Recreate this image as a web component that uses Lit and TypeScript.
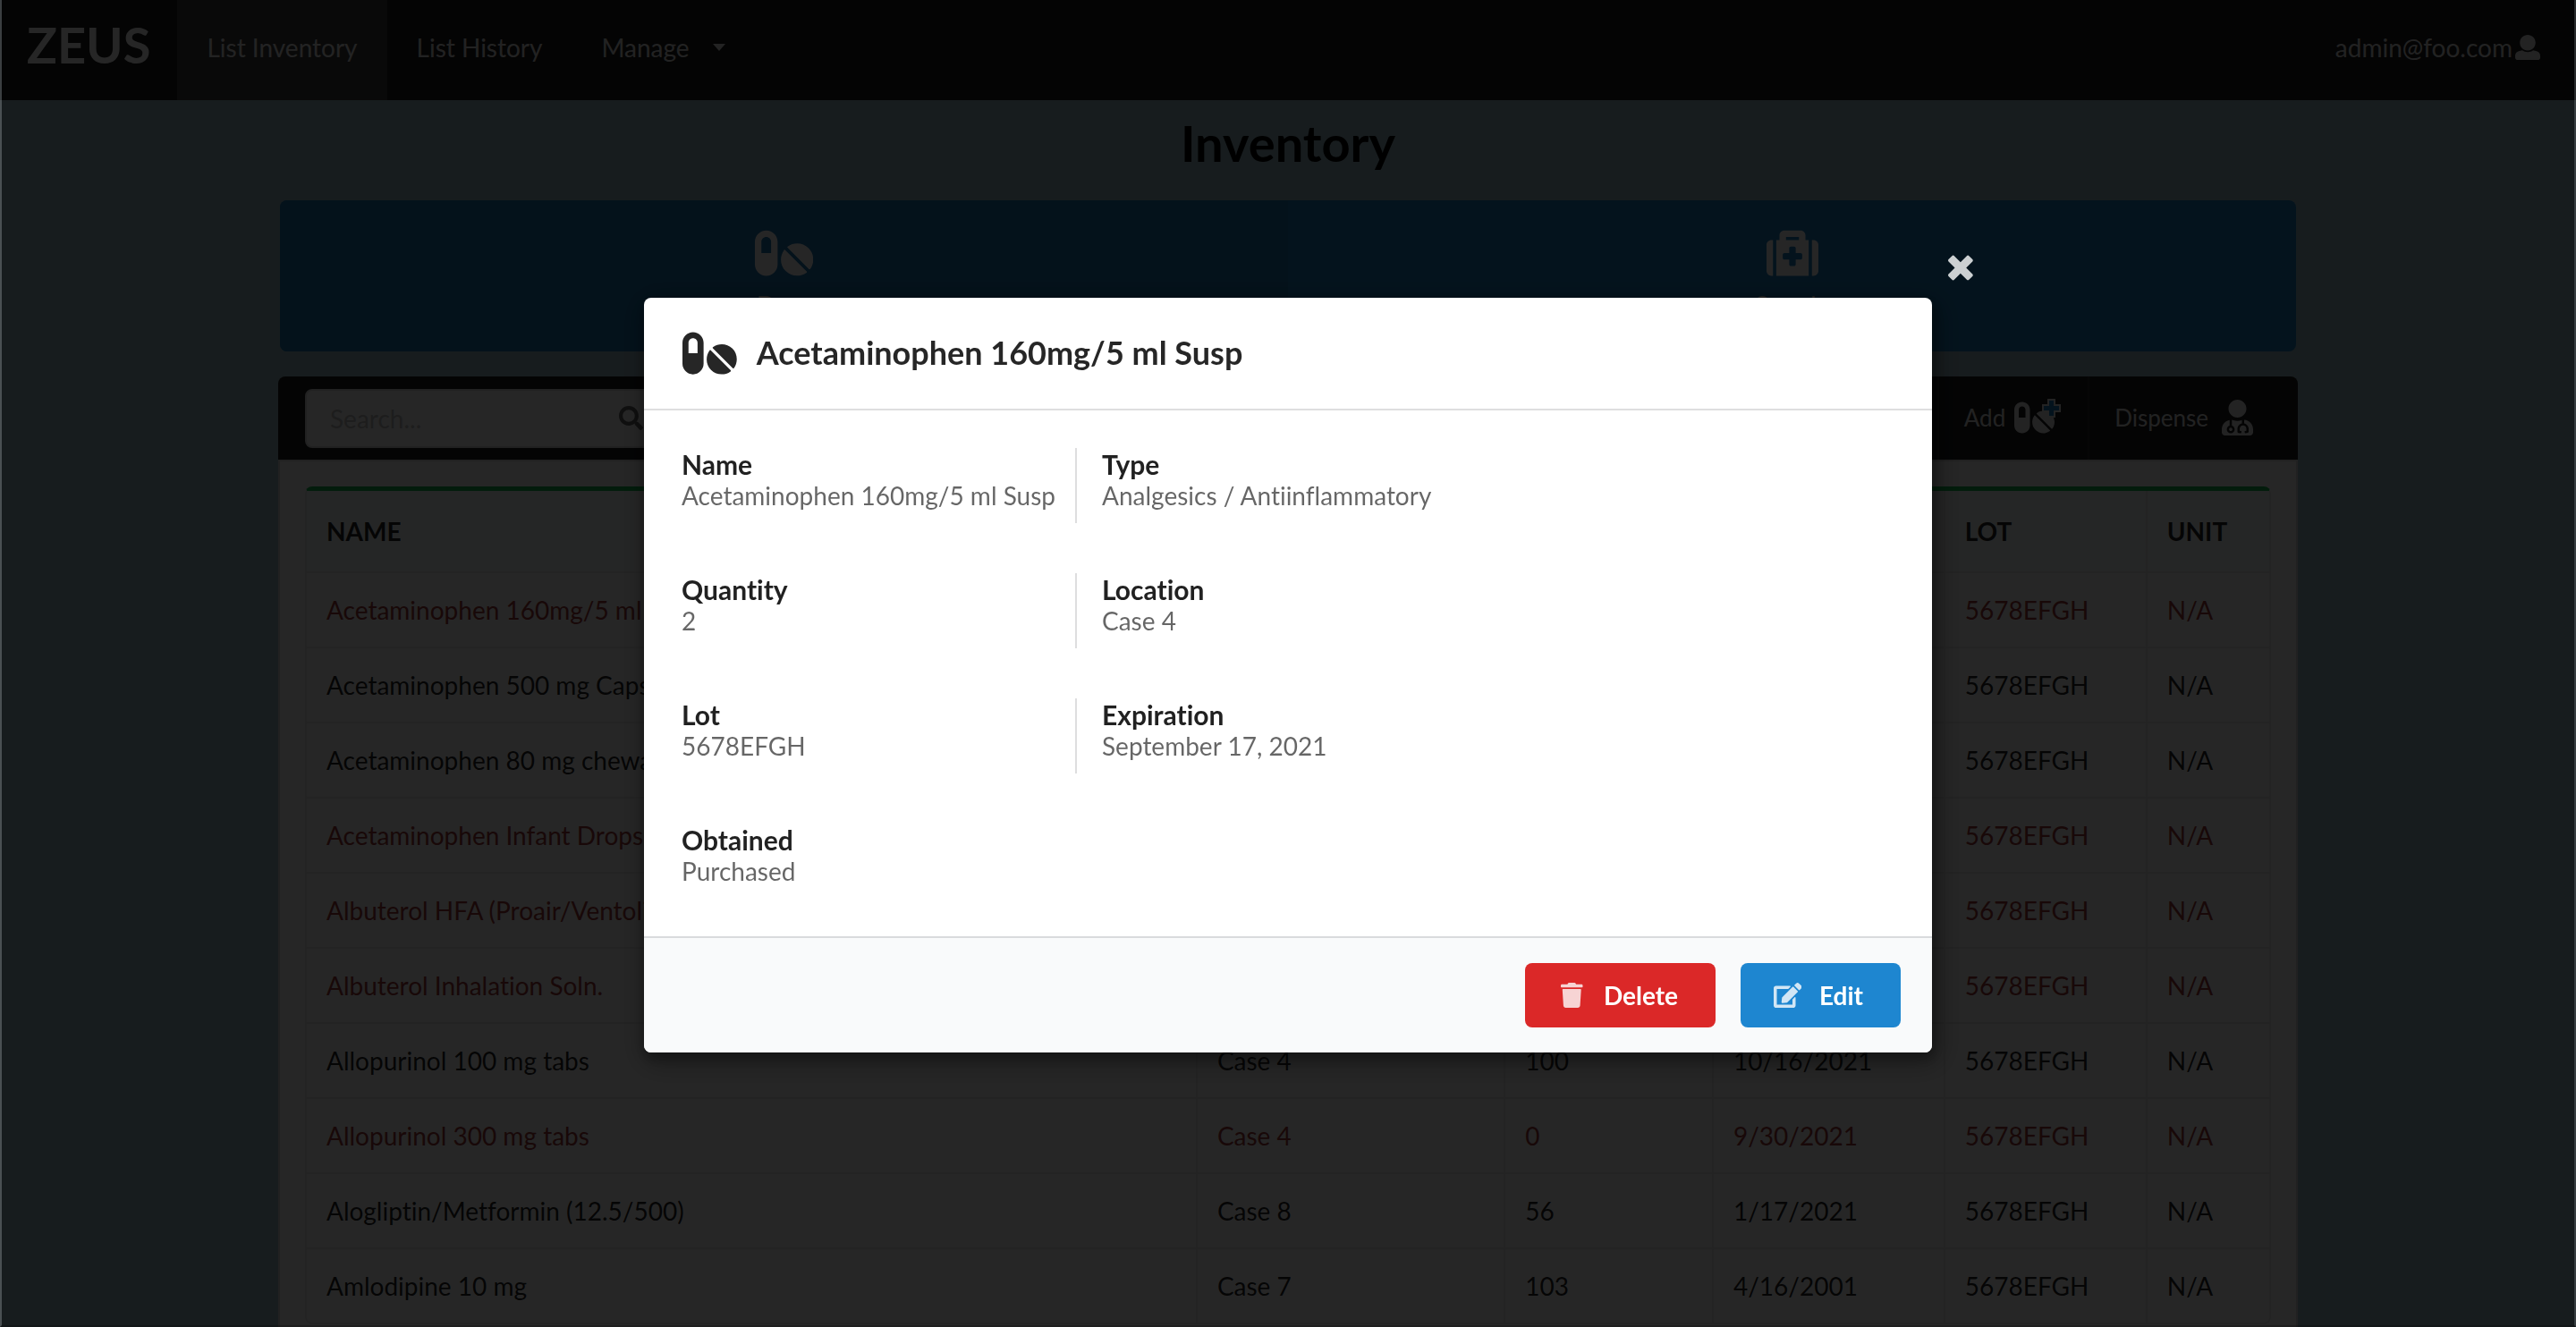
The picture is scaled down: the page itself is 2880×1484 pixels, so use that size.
import { LitElement, html, svg, css } from "lit";
import { customElement, property } from "lit/decorators.js";
import { classMap } from "lit/directives/class-map.js";

const ICONS: Record<string, { box: string; path: string }> = {
  user: {
    box: "0 0 512 512",
    path: "M256 0c88.366 0 160 71.634 160 160s-71.634 160-160 160S96 248.366 96 160 167.634 0 256 0zm183.283 333.821l-71.313-17.828c-74.923 53.89-165.738 41.864-223.94 0l-71.313 17.828C29.981 344.505 0 382.903 0 426.955V464c0 26.51 21.49 48 48 48h416c26.51 0 48-21.49 48-48v-37.045c0-44.052-29.981-82.45-72.717-93.134z",
  },
  pills: {
    box: "0 0 576 512",
    path: "M112 32C50.1 32 0 82.1 0 144v224c0 61.9 50.1 112 112 112s112-50.1 112-112V144c0-61.9-50.1-112-112-112zm48 224H64V144c0-26.5 21.5-48 48-48s48 21.5 48 48v112zm139.7-29.7c-3.5-3.5-9.4-3.1-12.3.8-45.3 62.5-40.4 150.1 15.9 206.4 56.3 56.3 143.9 61.2 206.4 15.9 4-2.9 4.3-8.8.8-12.3L299.7 226.3zm229.8-19c-56.3-56.3-143.9-61.2-206.4-15.9-4 2.9-4.3 8.8-.8 12.3l210.8 210.8c3.5 3.5 9.4 3.1 12.3-.8 45.3-62.6 40.5-150.1-15.9-206.4z",
  },
  medkit: {
    box: "0 0 512 512",
    path: "M96 480h320V128h-32V80c0-26.51-21.49-48-48-48H176c-26.51 0-48 21.49-48 48v48H96v352zm96-384h128v32H192V96zm320 80v256c0 26.51-21.49 48-48 48h-16V128h16c26.51 0 48 21.49 48 48zM64 480H48c-26.51 0-48-21.49-48-48V176c0-26.51 21.49-48 48-48h16v352zm288-208v32c0 8.837-7.163 16-16 16h-48v48c0 8.837-7.163 16-16 16h-32c-8.837 0-16-7.163-16-16v-48h-48c-8.837 0-16-7.163-16-16v-32c0-8.837 7.163-16 16-16h48v-48c0-8.837 7.163-16 16-16h32c8.837 0 16 7.163 16 16v48h48c8.837 0 16 7.163 16 16z",
  },
  search: {
    box: "0 0 512 512",
    path: "M505 442.7L405.3 343c-4.5-4.5-10.6-7-17-7H372c27.6-35.3 44-79.7 44-128C416 93.1 322.9 0 208 0S0 93.1 0 208s93.1 208 208 208c48.3 0 92.7-16.4 128-44v16.3c0 6.4 2.5 12.5 7 17l99.7 99.7c9.4 9.4 24.6 9.4 33.9 0l28.3-28.3c9.4-9.4 9.4-24.6.1-34zM208 336c-70.7 0-128-57.2-128-128 0-70.7 57.2-128 128-128 70.7 0 128 57.2 128 128 0 70.7-57.2 128-128 128z",
  },
  doctor: {
    box: "0 0 448 512",
    path: "M224 256c70.7 0 128-57.3 128-128S294.7 0 224 0 96 57.3 96 128s57.3 128 128 128zM104 424c0 13.3 10.7 24 24 24s24-10.7 24-24-10.7-24-24-24-24 10.7-24 24zm216-135.4v49c36.5 7.4 64 39.8 64 78.4v41.7c0 7.6-5.4 14.2-12.9 15.7l-32.2 6.4c-4.3.9-8.5-1.9-9.4-6.3l-3.1-15.7c-.9-4.3 1.9-8.6 6.3-9.4l19.3-3.9V416c0-62.8-96-65.1-96 1.9v26.7l19.3 3.9c4.3.9 7.1 5.1 6.3 9.4l-3.1 15.7c-.9 4.3-5.1 7.1-9.4 6.3l-31.2-4.2c-7.9-1.1-13.8-7.8-13.8-15.9V416c0-38.6 27.5-70.9 64-78.4v-45.2c-2.2.7-4.4 1.1-6.6 1.9-18 6.3-37.3 9.8-57.4 9.8s-39.4-3.5-57.4-9.8c-7.4-2.6-14.9-4.2-22.6-5.2v81.6c23.1 6.9 40 28.1 40 53.4 0 30.9-25.1 56-56 56s-56-25.1-56-56c0-25.3 16.9-46.5 40-53.4v-80.4C48.5 301 0 355.8 0 422.4v44.8C0 491.9 20.1 512 44.8 512h358.4c24.7 0 44.8-20.1 44.8-44.8v-44.8c0-72-56.8-130.3-128-133.8z",
  },
  close: {
    box: "0 0 384 512",
    path: "M323.1 441l53.9-53.9c9.4-9.4 9.4-24.5 0-33.9L279.8 256l97.2-97.2c9.4-9.4 9.4-24.5 0-33.9L323.1 71c-9.4-9.4-24.5-9.4-33.9 0L192 168.2 94.8 71c-9.4-9.4-24.5-9.4-33.9 0L7 124.9c-9.4 9.4-9.4 24.5 0 33.9l97.2 97.2L7 353.2c-9.4 9.4-9.4 24.5 0 33.9L60.9 441c9.4 9.4 24.5 9.4 33.9 0l97.2-97.2 97.2 97.2c9.3 9.3 24.5 9.3 33.9 0z",
  },
  trash: {
    box: "0 0 448 512",
    path: "M0 84V56c0-13.3 10.7-24 24-24h112l9.4-18.7c4-8.2 12.3-13.3 21.4-13.3h114.3c9.1 0 17.4 5.1 21.5 13.3L312 32h112c13.3 0 24 10.7 24 24v28c0 6.600-5.400 12-12 12H12C5.400 96 0 90.600 0 84zm415.200 56.700L394.800 467c-1.600 25.300-22.600 45-47.900 45H101.100c-25.300 0-46.300-19.700-47.900-45L32.800 140.700c-.4-6.900 5.100-12.700 12-12.700h358.500c6.800 0 12.300 5.800 11.900 12.700z",
  },
  edit: {
    box: "0 0 576 512",
    path: "M402.6 83.2l90.2 90.2c3.8 3.8 3.8 10 0 13.8L274.4 405.6l-92.8 10.3c-12.4 1.4-22.9-9.1-21.5-21.5l10.3-92.8L388.8 83.2c3.8-3.8 10-3.8 13.8 0zm162-22.9l-48.8-48.8c-15.2-15.2-39.9-15.2-55.2 0l-35.4 35.4c-3.8 3.8-3.8 10 0 13.8l90.2 90.2c3.8 3.8 10 3.8 13.8 0l35.4-35.4c15.2-15.3 15.2-40 0-55.2zM384 346.2V448H64V128h229.8c3.2 0 6.2-1.3 8.5-3.5l40-40c7.6-7.6 2.2-20.5-8.5-20.5H48C21.5 64 0 85.5 0 112v352c0 26.5 21.5 48 48 48h352c26.5 0 48-21.5 48-48V306.2c0-10.7-12.9-16-20.5-8.5l-40 40c-2.2 2.3-3.5 5.3-3.5 8.5z",
  },
};

@customElement("app-icon")
export class AppIcon extends LitElement {
  @property() name = "";

  static styles = css`
    :host {
      display: inline-flex;
      flex: none;
    }
    .glyph {
      display: block;
      height: 1em;
      fill: currentColor;
    }
  `;

  render() {
    const icon = ICONS[this.name];
    return icon
      ? html`<svg class="glyph" viewBox=${icon.box} aria-hidden="true">${svg`<path d=${icon.path}></path>`}</svg>`
      : null;
  }
}

interface Drug {
  name: string;
  location: string;
  quantity: number;
  expiration: string;
  expired?: boolean;
}

const DRUGS: Drug[] = [
  { name: "Acetaminophen 160mg/5 ml Susp", location: "Case 4", quantity: 2, expiration: "9/17/2021", expired: true },
  { name: "Acetaminophen 500 mg Caps", location: "Case 4", quantity: 50, expiration: "1/20/2022" },
  { name: "Acetaminophen 80 mg chewable", location: "Case 4", quantity: 30, expiration: "3/12/2022" },
  { name: "Acetaminophen Infant Drops", location: "Case 4", quantity: 0, expiration: "8/10/2021", expired: true },
  { name: "Albuterol HFA (Proair/Ventolin)", location: "Case 2", quantity: 0, expiration: "7/31/2021", expired: true },
  { name: "Albuterol Inhalation Soln.", location: "Case 2", quantity: 0, expiration: "6/30/2021", expired: true },
  { name: "Allopurinol 100 mg tabs", location: "Case 4", quantity: 100, expiration: "10/16/2021" },
  { name: "Allopurinol 300 mg tabs", location: "Case 4", quantity: 0, expiration: "9/30/2021", expired: true },
  { name: "Alogliptin/Metformin (12.5/500)", location: "Case 8", quantity: 56, expiration: "1/17/2021" },
  { name: "Amlodipine 10 mg", location: "Case 7", quantity: 103, expiration: "4/16/2001" },
];

const DETAILS: { label: string; value: string }[] = [
  { label: "Name", value: "Acetaminophen 160mg/5 ml Susp" },
  { label: "Type", value: "Analgesics / Antiinflammatory" },
  { label: "Quantity", value: "2" },
  { label: "Location", value: "Case 4" },
  { label: "Lot", value: "5678EFGH" },
  { label: "Expiration", value: "September 17, 2021" },
  { label: "Obtained", value: "Purchased" },
];

@customElement("app-root")
export class AppRoot extends LitElement {
  static styles = css`
    :host {
      display: block;
      height: 100vh;
      overflow: hidden;
      background: #9cbcc9;
      font-family: Lato, "Liberation Sans", sans-serif;
      font-size: 28px;
      font-variant-ligatures: none;
      line-height: 40px;
      color: rgba(0, 0, 0, 0.87);
    }
    * {
      box-sizing: border-box;
    }
    button,
    input {
      font: inherit;
      font-variant-ligatures: none;
      border: 0;
    }
    a {
      color: inherit;
      text-decoration: none;
    }

    .nav {
      display: flex;
      height: 112px;
      background: #1b1c1d;
      color: rgba(255, 255, 255, 0.9);
    }
    .brand,
    .nav-item,
    .account {
      display: flex;
      align-items: center;
    }
    .brand {
      padding: 0 30px 12px;
      font-size: 56px;
      font-weight: 700;
      color: #fff;
    }
    .nav-item {
      padding: 0 33px 6px;
      background: none;
      color: inherit;
    }
    .nav-item.active {
      background: #3d3e3f;
    }
    .caret {
      margin-left: 26px;
      border: 7px solid transparent;
      border-top: 8px solid currentColor;
      border-bottom: 0;
    }
    .account {
      margin-left: auto;
      gap: 3px;
      padding: 0 40px 6px 32px;
    }

    .container {
      width: calc(100% - 64px);
      max-width: 2258px;
      margin: 0 auto;
    }
    .title {
      margin: 16px 0 32px;
      font-size: 56px;
      line-height: 64px;
      font-weight: 700;
      text-align: center;
      color: #000;
    }

    .tabs {
      display: grid;
      grid-template-columns: 1fr 1fr;
      margin: 0 2px 28px;
      border-radius: 8px;
      overflow: hidden;
      background: #1c80c2;
      color: #fff;
    }
    .tab {
      display: flex;
      flex-direction: column;
      align-items: center;
      gap: 9px;
      padding: 30px 0 32px;
    }
    .tab.active {
      background: #1b77b3;
    }
    .tab-icon {
      font-size: 58px;
    }

    .toolbar {
      display: flex;
      align-items: stretch;
      height: 93px;
      padding-left: 30px;
      border-radius: 8px 8px 0 0;
      background: #1b1c1d;
      color: rgba(255, 255, 255, 0.9);
    }
    .search {
      display: flex;
      align-items: center;
      align-self: center;
      width: 404px;
      height: 66px;
      padding: 0 24px 0 26px;
      border: 2px solid #dedede;
      border-radius: 8px;
      background: #fff;
    }
    .search-box {
      flex: 1;
      min-width: 0;
      padding: 0;
      outline: 0;
      background: none;
    }
    .search-box::placeholder {
      color: #bfbfbf;
      opacity: 1;
    }
    .search-icon {
      font-size: 27px;
      color: rgba(0, 0, 0, 0.6);
    }
    .tools {
      display: flex;
      margin-left: auto;
    }
    .tool {
      display: flex;
      align-items: center;
      padding: 0 28px 2px;
      border-left: 2px solid #2b2c2d;
      background: none;
      color: inherit;
      font-size: 26px;
    }
    .tool.last {
      padding-right: 50px;
    }
    .tool-icon {
      position: relative;
      display: flex;
      font-size: 40px;
    }
    .tool-icon.pair {
      margin: 0 9px 0 10px;
    }
    .tool-icon.single {
      margin-left: 15px;
    }
    .plus {
      position: absolute;
      top: -1px;
      right: -7px;
      width: 21px;
      height: 21px;
    }

    .panel {
      padding: 28px;
      border: 2px solid #d9d9d9;
      background: #fff;
    }
    .grid {
      width: 100%;
      table-layout: fixed;
      border: 2px solid #ebebeb;
      border-top: 5px solid #14bd50;
      border-radius: 8px;
      border-spacing: 0;
      text-align: left;
    }
    .col-name {
      width: 45.3%;
    }
    .col-place {
      width: 15.7%;
    }
    .col-count {
      width: 10.6%;
    }
    .col-date {
      width: 11.8%;
    }
    .col-lot {
      width: 10.3%;
    }
    .cell {
      padding: 21px 22px;
      border-top: 2px solid #ebebeb;
      border-left: 2px solid #ebebeb;
      font-weight: 400;
      white-space: nowrap;
    }
    .cell.head {
      padding: 25px 22px;
      border-top: 0;
      font-weight: 700;
      background: #f9fafb;
    }
    .cell:first-child {
      border-left: 0;
    }
    .row.expired {
      color: #9f3a38;
    }

    .dimmer {
      position: fixed;
      inset: 0;
      display: flex;
      align-items: center;
      justify-content: center;
      padding-top: 28px;
      border: solid;
      border-width: 0 2px 2px;
      border-color: transparent rgba(190, 200, 205, 0.2) rgba(0, 0, 0, 0.2) rgba(190, 200, 205, 0.3);
      background: rgba(0, 0, 0, 0.85);
    }
    .modal {
      position: relative;
      width: 1440px;
      max-width: 90%;
      border-radius: 8px;
      background: #fff;
      box-shadow: 2px 6px 14px 2px rgba(0, 0, 0, 0.3), 4px 8px 30px 8px rgba(0, 0, 0, 0.25);
    }
    .close {
      position: absolute;
      top: -52px;
      right: -46px;
      padding: 0;
      background: none;
      color: #fff;
      opacity: 0.8;
      font-size: 37px;
      line-height: 37px;
    }
    .modal-head {
      display: flex;
      align-items: center;
      gap: 22px;
      padding: 35px 43px;
      border-bottom: 2px solid #dededf;
      color: rgba(0, 0, 0, 0.85);
    }
    .modal-icon {
      font-size: 54px;
    }
    .modal-title {
      margin: 0;
      padding-bottom: 3px;
      font-size: 36px;
      font-weight: 700;
    }
    .details {
      display: grid;
      grid-template-columns: max-content 1fr;
      grid-auto-rows: 84px;
      row-gap: 56px;
      margin: 0;
      padding: 42px;
    }
    .detail.ruled {
      padding-right: 22px;
      border-right: 2px solid #dededf;
    }
    .detail.second {
      padding-left: 28px;
    }
    .label {
      line-height: 36px;
      font-size: 30px;
      font-weight: 700;
    }
    .value {
      margin: 0;
      line-height: 34px;
      color: rgba(0, 0, 0, 0.6);
    }
    .actions {
      display: flex;
      justify-content: flex-end;
      gap: 28px;
      padding: 28px 35px;
      border-top: 2px solid #d9dbdd;
      border-radius: 0 0 8px 8px;
      background: #f9fafb;
    }
    .button {
      display: flex;
      align-items: center;
      gap: 19px;
      height: 72px;
      padding: 0 42px 0 36px;
      border-radius: 8px;
      color: #fff;
      font-weight: 700;
    }
    .button.red {
      background: #db2828;
    }
    .button.blue {
      background: #1e86d0;
    }
    .button-icon {
      justify-content: center;
      width: 33px;
      opacity: 0.8;
    }
  `;

  private renderRow(drug: Drug) {
    return html`<tr class=${classMap({ row: true, expired: !!drug.expired })}>
      <td class="cell">${drug.name}</td>
      <td class="cell">${drug.location}</td>
      <td class="cell">${drug.quantity}</td>
      <td class="cell">${drug.expiration}</td>
      <td class="cell">5678EFGH</td>
      <td class="cell">N/A</td>
    </tr>`;
  }

  render() {
    return html`
      <nav class="nav">
        <a class="brand" href="#">ZEUS</a>
        <a class="nav-item active" href="#inventory">List Inventory</a>
        <a class="nav-item" href="#history">List History</a>
        <button class="nav-item">Manage<span class="caret"></span></button>
        <a class="account" href="#account">admin@foo.com<app-icon name="user"></app-icon></a>
      </nav>
      <main class="container">
        <h1 class="title">Inventory</h1>
        <div class="tabs">
          <a class="tab active" href="#drug"><app-icon class="tab-icon" name="pills"></app-icon>Drug</a>
          <a class="tab" href="#supply"><app-icon class="tab-icon" name="medkit"></app-icon>Supply</a>
        </div>
        <div class="toolbar">
          <label class="search">
            <input class="search-box" type="text" placeholder="Search..." aria-label="Search" />
            <app-icon class="search-icon" name="search"></app-icon>
          </label>
          <div class="tools">
            <button class="tool">
              Add<span class="tool-icon pair"
                ><app-icon name="pills"></app-icon
                ><svg class="plus" viewBox="0 0 21 21" aria-hidden="true">
                  <path fill="#e8e8e8" d="M6 0h9v6h6v9h-6v6H6v-6H0V6h6z"></path>
                  <path fill="#1c80c2" d="M8 2h5v6h6v5h-6v6H8v-6H2V8h6z"></path></svg
              ></span>
            </button>
            <button class="tool last">
              Dispense<span class="tool-icon single"><app-icon name="doctor"></app-icon></span>
            </button>
          </div>
        </div>
        <section class="panel">
          <table class="grid">
            <colgroup>
              <col class="col-name" />
              <col class="col-place" />
              <col class="col-count" />
              <col class="col-date" />
              <col class="col-lot" />
              <col />
            </colgroup>
            <thead>
              <tr>
                ${["NAME", "LOCATION", "QUANTITY", "EXPIRATION", "LOT", "UNIT"].map(
                  (h) => html`<th class="cell head" scope="col">${h}</th>`
                )}
              </tr>
            </thead>
            <tbody>
              ${DRUGS.map((d) => this.renderRow(d))}
            </tbody>
          </table>
        </section>
      </main>
      <div class="dimmer">
        <div class="modal" role="dialog" aria-modal="true" aria-labelledby="modal-title">
          <button class="close" aria-label="Close"><app-icon name="close"></app-icon></button>
          <header class="modal-head">
            <app-icon class="modal-icon" name="pills"></app-icon>
            <h2 class="modal-title" id="modal-title">Acetaminophen 160mg/5 ml Susp</h2>
          </header>
          <dl class="details">
            ${DETAILS.map(
              (d, i) => html`<div
                class=${classMap({
                  detail: true,
                  ruled: i % 2 === 0 && i < DETAILS.length - 1,
                  second: i % 2 === 1,
                })}
              >
                <dt class="label">${d.label}</dt>
                <dd class="value">${d.value}</dd>
              </div>`
            )}
          </dl>
          <footer class="actions">
            <button class="button red"><app-icon class="button-icon" name="trash"></app-icon>Delete</button>
            <button class="button blue"><app-icon class="button-icon" name="edit"></app-icon>Edit</button>
          </footer>
        </div>
      </div>
    `;
  }
}
